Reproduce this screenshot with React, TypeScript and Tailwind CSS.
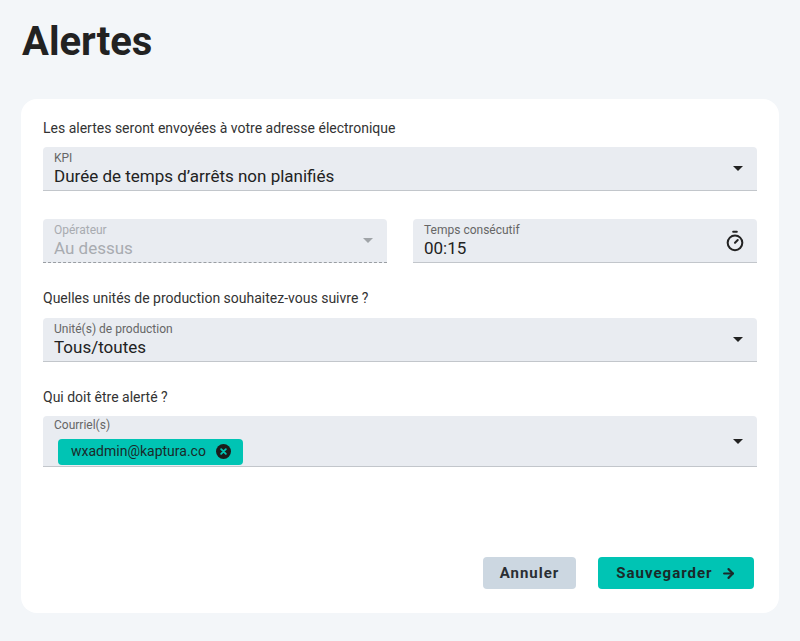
import { ArrowRight, Timer } from 'lucide-react'

function Caret({ muted }: { muted?: boolean }) {
  return (
    <svg width="10" height="5" viewBox="0 0 10 5" className={muted ? 'fill-[#a0a4a8]' : 'fill-[#222]'}>
      <path d="M0 0h10L5 5z" />
    </svg>
  )
}

function Field({ label, value, muted, right }: { label: string; value: string; muted?: boolean; right?: React.ReactNode }) {
  return (
    <div
      className={`h-[44px] bg-[#e9ecf1] rounded-t flex items-center pl-[11px] pr-[14px] ${
        muted ? 'border-b border-dashed border-[#9a9ea3]' : 'border-b border-[#c2c6cb]'
      }`}
    >
      <div className="flex-1 flex flex-col pt-[1px]">
        <span className={`text-[12px] leading-[15px] ${muted ? 'text-[#a8abb0]' : 'text-[#666]'}`}>{label}</span>
        <span className={`text-[17px] leading-[21px] ${muted ? 'text-[#a8abb0]' : 'text-[#222]'}`}>{value}</span>
      </div>
      {right ?? <Caret muted={muted} />}
    </div>
  )
}

export default function App() {
  return (
    <div className="min-h-screen bg-[#f3f6f9] font-[Roboto] px-[21px] pt-[18px] pb-[27px]">
      <h1 className="text-[40px] leading-[48px] font-bold text-[#222] pl-[1px]">Alertes</h1>

      <div className="mt-[33px] bg-white rounded-2xl px-[22px] pt-[20px] pb-[24px] flex flex-col">
        <p className="text-[14px] leading-[18px] text-[#333]">Les alertes seront envoyées à votre adresse électronique</p>
        <div className="mt-[10px]">
          <Field label="KPI" value="Durée de temps d’arrêts non planifiés" />
        </div>

        <div className="mt-[28px] grid grid-cols-2 gap-[26px]">
          <Field label="Opérateur" value="Au dessus" muted />
          <Field
            label="Temps consécutif"
            value="00:15"
            right={<Timer className="w-[22px] h-[22px] text-[#222] -mr-[3px]" strokeWidth={2.2} />}
          />
        </div>

        <p className="mt-[26px] text-[14px] leading-[18px] text-[#333]">Quelles unités de production souhaitez-vous suivre ?</p>
        <div className="mt-[11px]">
          <Field label="Unité(s) de production" value="Tous/toutes" />
        </div>

        <p className="mt-[26px] text-[14px] leading-[18px] text-[#333]">Qui doit être alerté ?</p>
        <div className="mt-[10px] h-[51px] bg-[#e9ecf1] rounded-t border-b border-[#c2c6cb] flex items-center pl-[11px] pr-[14px]">
          <div className="flex-1 flex flex-col">
            <span className="text-[12px] leading-[15px] text-[#666]">Courriel(s)</span>
            <span className="mt-[6px] ml-[4px] self-start h-[26px] bg-[#00c4b4] rounded-[4px] flex items-center gap-[10px] pl-[13px] pr-[12px] text-[14px] text-[#1a2a2a]">
              wxadmin@kaptura.co
              <svg width="15" height="15" viewBox="0 0 16 16">
                <circle cx="8" cy="8" r="8" fill="#1c1c1c" />
                <path d="M5.5 5.5l5 5M10.5 5.5l-5 5" stroke="#00c4b4" strokeWidth="2" strokeLinecap="round" />
              </svg>
            </span>
          </div>
          <Caret />
        </div>

        <div className="mt-[90px] flex justify-end gap-[22px] pr-[3px]">
          <button className="h-[32px] w-[93px] rounded-[4px] bg-[#ccd7e1] text-[15px] font-bold tracking-[1px] text-[#2a2e33]">
            Annuler
          </button>
          <button className="h-[32px] w-[156px] rounded-[4px] bg-[#00c4b4] text-[15px] font-bold tracking-[1px] text-[#1a2a2a] flex items-center justify-center gap-[8px]">
            Sauvegarder
            <ArrowRight className="w-[15px] h-[15px]" strokeWidth={3.5} />
          </button>
        </div>
      </div>
    </div>
  )
}
